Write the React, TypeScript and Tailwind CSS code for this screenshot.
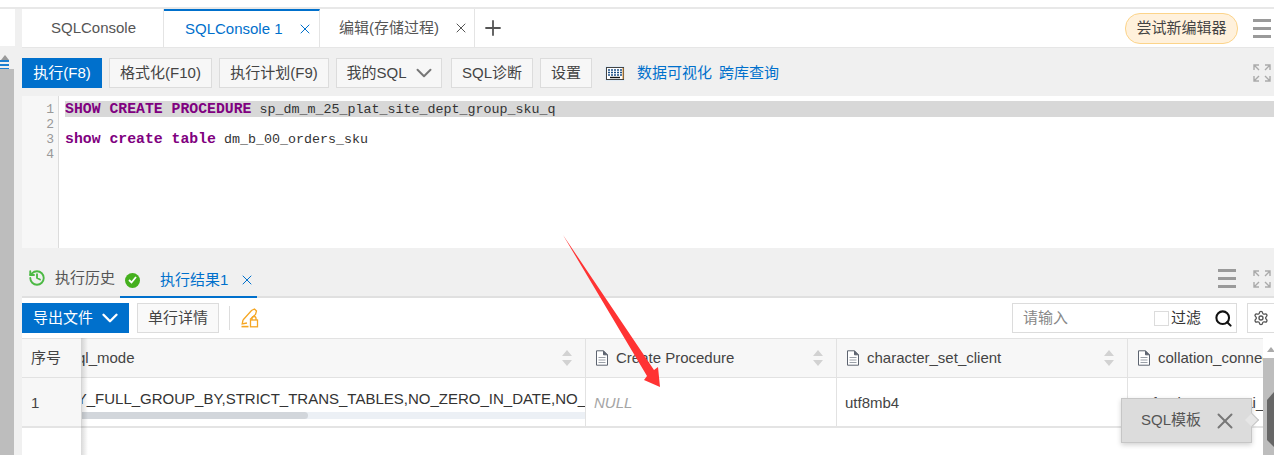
import { History, Plus, X, ChevronDown, Search, Settings } from 'lucide-react';

const FONT = "font-['Liberation_Sans','Noto_Sans_CJK_SC',sans-serif]";

function Hamburger({ className }: { className?: string }) {
  return (
    <div className={`flex w-[18px] flex-col gap-[5px] ${className ?? ''}`}>
      <span className="h-[3px] bg-[#9a9a9a]" />
      <span className="h-[3px] bg-[#9a9a9a]" />
      <span className="h-[3px] bg-[#9a9a9a]" />
    </div>
  );
}

function ExpandIcon() {
  return (
    <svg width="18" height="18" viewBox="0 0 18 18" fill="none" stroke="#aaa" strokeWidth="1.4">
      <path d="M1 6V1h5M1 1l5 5M12 1h5v5M17 1l-5 5M1 12v5h5M1 17l5-5M17 12v5h-5M17 17l-5-5" />
    </svg>
  );
}

function FileIcon() {
  return (
    <svg width="14" height="16" viewBox="0 0 14 16" fill="none" className="shrink-0">
      <path d="M1.5.8h7l4 4v10.4h-11z" stroke="#5d6470" strokeWidth="1" fill="#fff" />
      <path d="M8.5.8v4h4" stroke="#5d6470" strokeWidth="1" fill="#5d6470" />
      <path d="M3.5 7.5h7M3.5 10h7M3.5 12.5h7" stroke="#9aa0a8" strokeWidth="1" />
    </svg>
  );
}

function SortArrows() {
  return (
    <svg width="10" height="16" viewBox="0 0 10 16" className="shrink-0" fill="#d2d2d2">
      <path d="M5 0l5 6H0zM5 16L0 10h10z" />
    </svg>
  );
}

function ToolButton({ children, className }: { children: React.ReactNode; className?: string }) {
  return (
    <div className={`flex h-[30px] items-center justify-center border border-[#dcdcdc] bg-[#f7f7f7] text-[15px] text-[#444] ${className ?? ''}`}>
      {children}
    </div>
  );
}

function HeaderCell({ label, className, sortable = true }: { label: string; className: string; sortable?: boolean }) {
  return (
    <div className={`flex h-full min-w-0 items-center gap-[7px] pl-[9px] ${className}`}>
      <FileIcon />
      <span className="min-w-0 flex-1 overflow-hidden whitespace-nowrap text-[#444]">{label}</span>
      {sortable && <SortArrows />}
    </div>
  );
}

export default function App() {
  return (
    <div className={`relative flex h-[455px] w-[1274px] overflow-hidden bg-white text-[15px] ${FONT}`}>
      {/* left rail */}
      <div className="flex w-[22px] shrink-0 flex-col bg-[#f0f0f0]">
        <div className="mt-0 h-[7px] bg-white" />
        <div className="h-[2px] bg-[#e8e8e8]" />
        <div className="h-[37px] w-[15px] bg-white" />
        <div className="relative h-[23px] w-[14px]">
          <div className="absolute left-[1px] top-[9px] h-0 w-0 border-x-[4px] border-b-[5px] border-x-transparent border-b-[#999]" />
          <div className="absolute left-0 top-[14px] h-[2px] w-[9px] bg-[#1b7fd0]" />
          <div className="absolute left-0 top-[18px] h-[2px] w-[9px] bg-[#1b7fd0]" />
          <div className="absolute left-0 top-[22px] h-[1px] w-[9px] bg-[#1b7fd0]" />
        </div>
        <div className="w-[14px] flex-1 bg-[#bdbdbd]" />
      </div>

      {/* main */}
      <div className="flex min-w-0 flex-1 flex-col">
        <div className="h-[7px] bg-white" />
        <div className="h-[2px] bg-[#e8e8e8]" />

        {/* tab strip */}
        <div className="flex h-[39px] items-stretch border-b border-[#e6e6e6] bg-white">
          <div className="flex w-[142px] items-center border-r border-[#e4e4e4] pl-[29px] text-[#555]">SQLConsole</div>
          <div className="flex w-[156px] items-center border-r border-t-2 border-[#e4e4e4] border-t-[#0070cc] pl-[21px] text-[#0070cc]">
            <span className="flex-1">SQLConsole 1</span>
            <X size={16} strokeWidth={1.5} className="mr-[6px] text-[#0070cc]" />
          </div>
          <div className="flex w-[155px] items-center border-r border-[#e4e4e4] pl-[19px] text-[#555]">
            <span className="flex-1">编辑(存储过程)</span>
            <X size={16} strokeWidth={1.5} className="mr-[5px] text-[#555]" />
          </div>
          <div className="flex w-[36px] items-center justify-center">
            <Plus size={24} strokeWidth={1.8} className="text-[#555]" />
          </div>
          <div className="ml-auto flex items-center">
            <div className="flex h-[31px] w-[113px] items-center justify-center rounded-[15px] border border-[#fcd48a] bg-[#fff1dc] text-[#444]">
              尝试新编辑器
            </div>
            <Hamburger className="ml-[15px] mr-[3px]" />
          </div>
        </div>

        {/* sql toolbar */}
        <div className="flex h-[48px] items-center bg-[#f0f0f0] pt-[2px]">
          <div className="flex h-[30px] w-[80px] items-center justify-center bg-[#0070cc] text-white">执行(F8)</div>
          <ToolButton className="ml-[7px] w-[103px]">格式化(F10)</ToolButton>
          <ToolButton className="ml-[7px] w-[110px]">执行计划(F9)</ToolButton>
          <ToolButton className="ml-[7px] w-[106px] gap-[4px] pl-[5px]">
            <span>我的SQL</span>
            <ChevronDown size={26} strokeWidth={1.8} className="text-[#777]" />
          </ToolButton>
          <ToolButton className="ml-[9px] w-[82px]">SQL诊断</ToolButton>
          <ToolButton className="ml-[7px] w-[52px]">设置</ToolButton>
          <svg width="20" height="15" viewBox="0 0 20 15" className="ml-[13px]">
            <rect x="0.5" y="0.5" width="19" height="14" fill="#cfe6fa" />
            <rect x="1.5" y="1.5" width="17" height="12" fill="#fff" stroke="#444" />
            <path d="M3 4h14M3 6.5h14M3 9h14" stroke="#1c4f86" strokeWidth="1.4" strokeDasharray="2 1" />
            <path d="M5 11.5h10" stroke="#111" strokeWidth="1.4" />
            <path d="M18 2v11" stroke="#d98a2b" strokeWidth="1" />
          </svg>
          <span className="ml-[12px] text-[#0070cc]">数据可视化</span>
          <span className="ml-[7px] text-[#0070cc]">跨库查询</span>
          <div className="ml-auto mr-[3px]">
            <ExpandIcon />
          </div>
        </div>

        {/* editor */}
        <div className="flex h-[152px] bg-white">
          <div className="w-[37px] shrink-0 border-r border-[#dcdcdc] bg-[#f7f7f7] pr-[4px] pt-[6px] text-right font-['Liberation_Mono',monospace] text-[13px] leading-[15px] text-[#999]">
            <div>1</div>
            <div>2</div>
            <div>3</div>
            <div>4</div>
          </div>
          <div className="flex-1 pl-[6px] pt-[5px] font-['Liberation_Mono',monospace] text-[13.33px] text-[#333]">
            <div className="h-[16px] whitespace-nowrap bg-[#d8d8d8] leading-[17px]">
              <b className="text-[14.8px] text-[#800080]">SHOW CREATE PROCEDURE</b> sp_dm_m_25_plat_site_dept_group_sku_q
            </div>
            <div className="h-[14px]" />
            <div className="whitespace-nowrap leading-[17px]">
              <b className="text-[14.8px] text-[#800080]">show create table</b> dm_b_00_orders_sku
            </div>
          </div>
        </div>

        {/* result tabs */}
        <div className="flex h-[50px] items-end border-b-2 border-[#e0e0e0] bg-[#f0f0f0]">
          <div className="mb-[7px] ml-[6px] flex items-center">
            <History size={18} strokeWidth={2.5} className="text-[#4cb944]" />
            <span className="ml-[9px] text-[#555]">执行历史</span>
          </div>
          <div className="relative top-[2px] ml-[5px] flex h-[30px] w-[137px] items-center border-b-2 border-[#0070cc] pb-[4px] pl-[5px]">
            <div className="flex h-[15px] w-[15px] items-center justify-center rounded-full bg-[#45b01e]">
              <svg width="9" height="8" viewBox="0 0 9 8" fill="none" stroke="#fff" strokeWidth="1.8">
                <path d="M1 4l2.5 2.5L8 1" />
              </svg>
            </div>
            <span className="ml-[20px] text-[#0070cc]">执行结果1</span>
            <X size={16} strokeWidth={1.5} className="ml-[11px] text-[#0070cc]" />
          </div>
          <div className="mb-[8px] ml-auto flex items-center gap-[17px] pr-[3px]">
            <Hamburger />
            <ExpandIcon />
          </div>
        </div>

        {/* result toolbar */}
        <div className="flex h-[40px] items-center bg-white">
          <div className="flex h-[30px] w-[107px] items-center justify-center gap-[4px] bg-[#0070cc] pl-[5px] text-white">
            <span>导出文件</span>
            <ChevronDown size={26} strokeWidth={2.2} />
          </div>
          <div className="ml-[8px] flex h-[30px] w-[82px] items-center justify-center border border-[#dcdcdc] bg-[#f9f9f9] text-[#444]">单行详情</div>
          <div className="ml-[10px] h-[24px] w-px bg-[#ddd]" />
          <svg width="18" height="20" viewBox="0 0 18 20" fill="none" stroke="#f5a623" strokeWidth="1.3" className="ml-[11px]">
            <path d="M2 12L10.5 2.5 13.5 1l2 2-1 3.5L9 11.5" />
            <path d="M2 12l-.8 4 4.8-1" />
            <path d="M0.5 18.6h7" strokeWidth="1.6" />
            <rect x="9.5" y="12" width="7" height="6.8" />
            <path d="M11 12v-1.5a2 2 0 014 0V12" />
          </svg>
          <div className="ml-auto flex h-[30px] w-[225px] items-center border border-[#dcdcdc] pl-[10px] text-[#888]">
            <span className="flex-1">请输入</span>
            <span className="h-[15px] w-[15px] border border-[#dcdcdc] bg-white" />
            <span className="ml-[2px] text-[#333]">过滤</span>
            <Search size={19} strokeWidth={2.6} className="ml-[13px] mr-[3px] text-[#111]" />
          </div>
          <div className="ml-[10px] flex h-[30px] w-[27px] shrink-0 items-center justify-center border border-r-0 border-[#dcdcdc]">
            <Settings size={16} className="text-[#555]" />
          </div>
        </div>

        {/* results grid */}
        <div className="flex h-[90px] w-[1241px] flex-col border-b-2 border-[#e4e4e4] text-[#444]">
          <div className="flex h-[40px] items-center border-y border-[#e2e2e2] bg-[#f7f7f7]">
            <div className="flex h-full w-[60px] shrink-0 items-center pl-[9px]">序号</div>
            <div className="flex h-full w-[504px] shrink-0 items-center overflow-hidden border-r border-[#e2e2e2] pr-[13px]">
              <span className="-ml-[5px] flex-1">ql_mode</span>
              <SortArrows />
            </div>
            <HeaderCell label="Create Procedure" className="w-[251px] shrink-0 border-r border-[#e2e2e2] pr-[13px]" />
            <HeaderCell label="character_set_client" className="w-[291px] shrink-0 border-r border-[#e2e2e2] pr-[13px]" />
            <HeaderCell label="collation_connection" className="flex-1" sortable={false} />
          </div>
          <div className="flex flex-1 items-stretch">
            <div className="flex w-[60px] shrink-0 items-center bg-[#f7f7f7] pl-[9px] pt-[2px]">1</div>
            <div className="flex w-[504px] shrink-0 flex-col overflow-hidden border-r border-[#e2e2e2]">
              <div className="flex-1 overflow-hidden whitespace-nowrap pt-[10px] text-[#333]">
                <span className="-ml-[35px] inline-block">ONLY_FULL_GROUP_BY,STRICT_TRANS_TABLES,NO_ZERO_IN_DATE,NO_ZERO_DATE</span>
              </div>
              <div className="mb-[7px] h-[7px] bg-[#ecf0f5]">
                <div className="h-full w-[226px] rounded-r-[4px] bg-[#d2d6db]" />
              </div>
            </div>
            <div className="flex w-[251px] shrink-0 items-center border-r border-[#e2e2e2] pl-[8px] pt-[2px] italic text-[#a5a5a5]">NULL</div>
            <div className="flex w-[291px] shrink-0 items-center border-r border-[#e2e2e2] pl-[8px] pt-[2px]">utf8mb4</div>
            <div className="flex min-w-0 flex-1 items-center overflow-hidden whitespace-nowrap pl-[12px] pt-[2px]">utf8mb4_0900_ai_ci</div>
          </div>
        </div>
      </div>

      {/* frozen column shadow, runs down past the last row */}
      <div className="absolute bottom-0 left-[81px] top-[338px] w-[7px] bg-gradient-to-r from-black/15 to-transparent" />

      {/* right scrollbar */}
      <div className="absolute right-0 top-[338px] h-[117px] w-[11px] bg-white">
        <div className="ml-[4px] mt-[9px] h-0 w-0 border-x-[4px] border-b-[5px] border-x-transparent border-b-[#aaa]" />
        <div className="mt-[6px] h-[97px] bg-[#bdbdbd]" />
      </div>
      <svg width="7" height="55" viewBox="0 0 7 55" className="absolute right-0 top-[392px]" fill="#666">
        <path d="M7 0v55L0 48V8z" />
      </svg>

      {/* SQL template floating tip */}
      <div className="absolute left-[1121px] top-[398px] flex h-[45px] w-[131px] items-center border border-[#c6c6c6] bg-[#dcdcdc] pl-[19px] text-[#555] shadow-[0_2px_5px_rgba(0,0,0,0.18)]">
        <span>SQL模板</span>
        <X size={26} strokeWidth={1.8} className="ml-[11px] text-[#777]" />
        <div className="absolute -right-[6px] top-[16px] h-[10px] w-[10px] rotate-45 border-r border-t border-[#c6c6c6] bg-[#e6e6e6]" />
      </div>

      {/* annotation arrow */}
      <svg width="110" height="165" viewBox="0 0 110 165" className="absolute left-[560px] top-[230px]" fill="#ff3333">
        <path d="M3 5 L94 140 L98 137 L100 157 L84 150 L87 146 Z" />
      </svg>
    </div>
  );
}
